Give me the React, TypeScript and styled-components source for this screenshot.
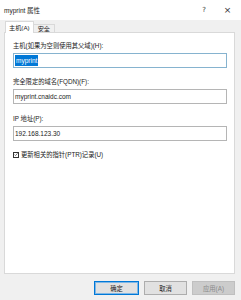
import React from "react";
import styled, { createGlobalStyle } from "styled-components";

const Global = createGlobalStyle`
  html, body { margin: 0; padding: 0; }
  body {
    width: 241px; height: 300px; overflow: hidden;
    background: #f0f0f0;
    font-family: "Liberation Sans", "Noto Sans CJK SC", sans-serif;
    color: #1a1a1a;
  }
`;

const Window = styled.div`
  width: 241px; height: 300px;
  display: flex; flex-direction: column;
  background: #f0f0f0;
`;

const TitleBar = styled.div`
  height: 20px; background: #fff;
  display: flex; align-items: center;
  padding: 0 0 0 4px; font-size: 6.5px; color: #222;
`;
const Title = styled.div` flex: 1; `;
const TitleBtn = styled.div<{ $w: number }>`
  width: ${(p) => p.$w}px; text-align: center; font-size: ${(p) => (p.$w > 20 ? 9 : 7)}px;
  color: #333; font-family: "DejaVu Sans", sans-serif;
`;

const TabRow = styled.div`
  display: flex; align-items: flex-end; height: 12px; padding-left: 5px;
  margin-top: 1px; position: relative; z-index: 1;
`;
const Tab = styled.div<{ $active?: boolean }>`
  height: ${(p) => (p.$active ? 12 : 9)}px;
  padding: 0 ${(p) => (p.$active ? 3 : 4)}px;
  display: flex; align-items: center; font-size: 6.2px;
  background: ${(p) => (p.$active ? "#fff" : "#f0f0f0")};
  border: 1px solid #d9d9d9; border-bottom: ${(p) => (p.$active ? "none" : "1px solid #d9d9d9")};
  ${(p) => (p.$active ? "" : "border-left: none;")}
  box-sizing: border-box;
  color: #222;
`;

const Panel = styled.div`
  margin: -1px 6px 0 4px; height: 242px; box-sizing: border-box;
  background: #fff; border: 1px solid #d9d9d9;
  padding: 9px 7px 0 8px;
  display: flex; flex-direction: column;
`;

const Label = styled.div<{ $mt?: number }>`
  font-size: 6.3px; line-height: 8px; height: 8px; color: #222;
  margin-top: ${(p) => p.$mt ?? 0}px;
`;

const Input = styled.div<{ $focus?: boolean }>`
  margin-top: 3px; height: 15px; box-sizing: border-box;
  border: 1px solid ${(p) => (p.$focus ? "#86b3cf" : "#b5b5b5")};
  display: flex; align-items: center; padding-left: 1px;
  font-size: 6.5px; color: #222;
`;
const Sel = styled.span`
  background: #0078d7; color: #fff; padding: 1px 1px; line-height: 9px;
`;

const CheckRow = styled.div`
  display: flex; align-items: center; gap: 2px; margin-top: 9px; font-size: 6.3px; color: #222;
`;
const Box = styled.div`
  width: 6px; height: 6px; border: 1px solid #333; box-sizing: border-box;
  display: flex; align-items: center; justify-content: center; background: #fff;
`;

const Footer = styled.div`
  flex: 1; display: flex; justify-content: flex-end; align-items: flex-start;
  padding: 7px 6px 0 0; gap: 5px;
`;
const Button = styled.div<{ $w: number; $kind?: "default" | "disabled" }>`
  width: ${(p) => p.$w}px; height: 14px; box-sizing: border-box;
  display: flex; align-items: center; justify-content: center;
  font-size: 6.3px;
  background: ${(p) => (p.$kind === "disabled" ? "#cccccc" : "#e1e1e1")};
  color: ${(p) => (p.$kind === "disabled" ? "#8a8a8a" : "#222")};
  border: 1px solid ${(p) => (p.$kind === "default" ? "#0078d7" : p.$kind === "disabled" ? "#bfbfbf" : "#adadad")};
  ${(p) => (p.$kind === "default" ? "box-shadow: inset 0 0 0 1px #7fb7e6;" : "")}
`;

export default function App() {
  return (
    <Window>
      <Global />
      <TitleBar>
        <Title>myprint 属性</Title>
        <TitleBtn $w={20}>?</TitleBtn>
        <TitleBtn $w={27}>×</TitleBtn>
      </TitleBar>
      <TabRow>
        <Tab $active>主机(A)</Tab>
        <Tab>安全</Tab>
      </TabRow>
      <Panel>
        <Label>主机(如果为空则使用其父域)(H):</Label>
        <Input $focus><Sel>myprint</Sel></Input>
        <Label $mt={10}>完全限定的域名(FQDN)(F):</Label>
        <Input>myprint.cnaidc.com</Input>
        <Label $mt={11}>IP 地址(P):</Label>
        <Input>192.168.123.30</Input>
        <CheckRow>
          <Box>
            <svg width="5" height="5" viewBox="0 0 5 5">
              <path d="M0.6 2.6 L1.9 3.9 L4.4 1" fill="none" stroke="#222" strokeWidth="0.8" />
            </svg>
          </Box>
          更新相关的指针(PTR)记录(U)
        </CheckRow>
      </Panel>
      <Footer>
        <Button $w={45} $kind="default">确定</Button>
        <Button $w={43}>取消</Button>
        <Button $w={43} $kind="disabled">应用(A)</Button>
      </Footer>
    </Window>
  );
}
